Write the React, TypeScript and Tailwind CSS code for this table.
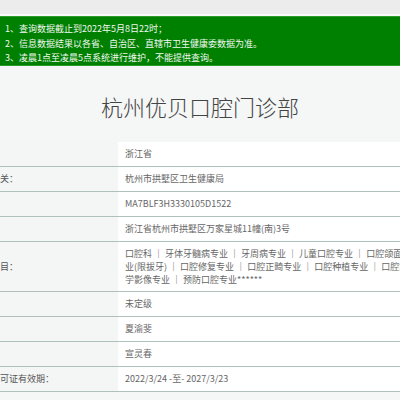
import React from "react";

const rows: { label: string; value: React.ReactNode; multi?: boolean }[] = [
  { label: "省份：", value: "浙江省" },
  { label: "登记机关：", value: "杭州市拱墅区卫生健康局" },
  { label: "代码：", value: "MA7BLF3H3330105D1522" },
  { label: "地址：", value: "浙江省杭州市拱墅区万家星城11幢(南)3号" },
  {
    label: "诊疗科目：",
    multi: true,
    value: (
      <>
        <div className="whitespace-nowrap">口腔科 ｜ 牙体牙髓病专业 ｜ 牙周病专业 ｜ 儿童口腔专业 ｜ 口腔颌面外科专</div>
        <div className="whitespace-nowrap">业(限拔牙) ｜ 口腔修复专业 ｜ 口腔正畸专业 ｜ 口腔种植专业 ｜ 口腔颌面医</div>
        <div className="whitespace-nowrap">学影像专业 ｜ 预防口腔专业******</div>
      </>
    ),
  },
  { label: "级别：", value: "未定级" },
  { label: "法人：", value: "夏渝斐" },
  { label: "负责", value: "宣灵春" },
  { label: "执业许可证有效期：", value: "2022/3/24 -至- 2027/3/23" },
];

export default function App() {
  return (
    <div
      className="w-[400px] h-[400px] overflow-hidden bg-[#f5f6f6]"
      style={{ fontFamily: '"Noto Sans CJK SC", "Noto Sans", sans-serif' }}
    >
      <div className="h-[14px] bg-[#ececec]" />
      <div className="h-[2px] bg-[#fafafa]" />
      <div className="h-[50px] bg-[#008000] border-y border-[#2e9a2e] pt-[5px] pl-[5px] text-[9px] leading-[14.5px] text-[#f2f8f2] whitespace-nowrap">
        <div>1、查询数据截止到2022年5月8日22时；</div>
        <div>2、信息数据结果以各省、自治区、直辖市卫生健康委数据为准。</div>
        <div>3、凌晨1点至凌晨5点系统进行维护，不能提供查询。</div>
      </div>
      <div className="pt-[29px] pb-[25px] text-center text-[22px] leading-[22px] font-light text-[#444444]">
        杭州优贝口腔门诊部
      </div>
      <div className="overflow-hidden text-[9px] text-[#666666]">
        {rows.map((r, i) => (
          <div key={i} className="flex border-b border-[#aec2b8]">
            <div className="w-[118px] shrink-0 overflow-hidden bg-[#f4f5f5] flex items-center">
              <span className="ml-[-27px] whitespace-nowrap text-[#555555]">{r.label}</span>
            </div>
            <div
              className={
                r.multi
                  ? "flex-1 bg-white pl-[7px] py-[5px] leading-[13px] overflow-hidden"
                  : "flex-1 bg-white pl-[7px] h-[24px] flex items-center whitespace-nowrap overflow-hidden"
              }
            >
              {r.value}
            </div>
          </div>
        ))}
      </div>
    </div>
  );
}
